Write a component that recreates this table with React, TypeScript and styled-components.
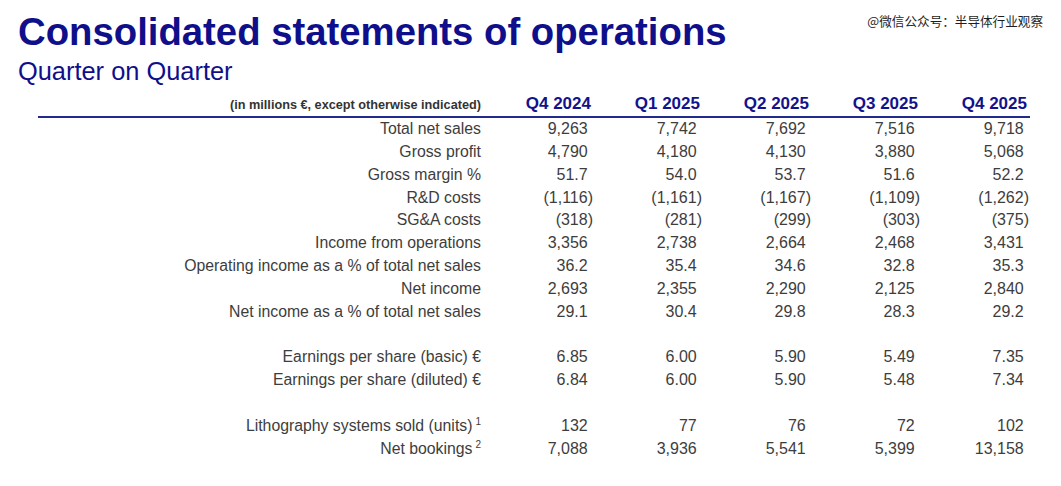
import React from "react";
import styled, { createGlobalStyle } from "styled-components";

const GlobalStyle = createGlobalStyle`
  html, body {
    margin: 0;
    padding: 0;
    background: #ffffff;
  }
  body {
    font-family: "Liberation Sans", Arial, sans-serif;
  }
`;

const Slide = styled.div`
  position: relative;
  width: 1061px;
  height: 486px;
  background: #ffffff;
  overflow: hidden;
  box-sizing: border-box;
  padding: 13px 0 0 18px;
`;

const Watermark = styled.div`
  position: absolute;
  top: 12px;
  right: 18px;
  font-family: "Noto Sans CJK SC", "Liberation Sans", sans-serif;
  font-size: 12.6px;
  line-height: 18px;
  color: #1e1e1e;
  white-space: nowrap;
`;

const Title = styled.h1`
  margin: 0;
  font-size: 38.3px;
  line-height: 38px;
  font-weight: 700;
  color: #0f0f8c;
  white-space: nowrap;
`;

const Subtitle = styled.h2`
  margin: 8px 0 0 0;
  font-size: 25.4px;
  line-height: 25px;
  font-weight: 400;
  color: #0f0f8c;
  white-space: nowrap;
`;

const Table = styled.div`
  display: grid;
  grid-template-columns: 447px repeat(5, 109px);
  width: 992px;
  margin: 10px 0 0 20px;
`;

const HeaderLabel = styled.div`
  text-align: right;
  padding-right: 4px;
  font-size: 12.7px;
  font-weight: 700;
  color: #333333;
  line-height: 16px;
  padding-bottom: 3px;
  align-self: end;
  border-bottom: 2px solid #232a8e;
  white-space: nowrap;
`;

const HeaderCell = styled.div`
  text-align: right;
  padding-right: 3px;
  font-size: 17px;
  font-weight: 700;
  color: #12128c;
  line-height: 20px;
  padding-bottom: 2px;
  align-self: end;
  border-bottom: 2px solid #232a8e;
  white-space: nowrap;
`;

const Label = styled.div`
  text-align: right;
  padding-right: 4px;
  font-size: 15.8px;
  line-height: 22.85px;
  color: #3d3d3d;
  white-space: nowrap;
`;

const Value = styled.div<{ $neg: boolean }>`
  text-align: right;
  padding-right: ${(p) => (p.$neg ? "1px" : "6.3px")};
  font-size: 16px;
  line-height: 22.85px;
  color: #3d3d3d;
  white-space: nowrap;
`;

const Spacer = styled.div`
  grid-column: 1 / -1;
  height: 22.85px;
`;

const Note = styled.sup`
  font-size: 10px;
  line-height: 0;
  vertical-align: 6px;
  margin-left: 3px;
`;

type Row = { label: string; note?: string; values: string[] } | null;

const quarters = ["Q4 2024", "Q1 2025", "Q2 2025", "Q3 2025", "Q4 2025"];

const rows: Row[] = [
  { label: "Total net sales", values: ["9,263", "7,742", "7,692", "7,516", "9,718"] },
  { label: "Gross profit", values: ["4,790", "4,180", "4,130", "3,880", "5,068"] },
  { label: "Gross margin %", values: ["51.7", "54.0", "53.7", "51.6", "52.2"] },
  { label: "R&D costs", values: ["(1,116)", "(1,161)", "(1,167)", "(1,109)", "(1,262)"] },
  { label: "SG&A costs", values: ["(318)", "(281)", "(299)", "(303)", "(375)"] },
  { label: "Income from operations", values: ["3,356", "2,738", "2,664", "2,468", "3,431"] },
  { label: "Operating income as a % of total net sales", values: ["36.2", "35.4", "34.6", "32.8", "35.3"] },
  { label: "Net income", values: ["2,693", "2,355", "2,290", "2,125", "2,840"] },
  { label: "Net income as a % of total net sales", values: ["29.1", "30.4", "29.8", "28.3", "29.2"] },
  null,
  { label: "Earnings per share (basic) €", values: ["6.85", "6.00", "5.90", "5.49", "7.35"] },
  { label: "Earnings per share (diluted) €", values: ["6.84", "6.00", "5.90", "5.48", "7.34"] },
  null,
  { label: "Lithography systems sold (units)", note: "1", values: ["132", "77", "76", "72", "102"] },
  { label: "Net bookings", note: "2", values: ["7,088", "3,936", "5,541", "5,399", "13,158"] },
];

export default function App() {
  return (
    <>
      <GlobalStyle />
      <Slide>
        <Watermark>@微信公众号：半导体行业观察</Watermark>
        <Title>Consolidated statements of operations</Title>
        <Subtitle>Quarter on Quarter</Subtitle>
        <Table>
          <HeaderLabel>(in millions €, except otherwise indicated)</HeaderLabel>
          {quarters.map((q) => (
            <HeaderCell key={q}>{q}</HeaderCell>
          ))}
          {rows.map((r, i) =>
            r === null ? (
              <Spacer key={`s${i}`} />
            ) : (
              <React.Fragment key={r.label}>
                <Label>
                  {r.label}
                  {r.note && <Note>{r.note}</Note>}
                </Label>
                {r.values.map((v, j) => (
                  <Value key={j} $neg={v.startsWith("(")}>
                    {v}
                  </Value>
                ))}
              </React.Fragment>
            )
          )}
        </Table>
      </Slide>
    </>
  );
}
